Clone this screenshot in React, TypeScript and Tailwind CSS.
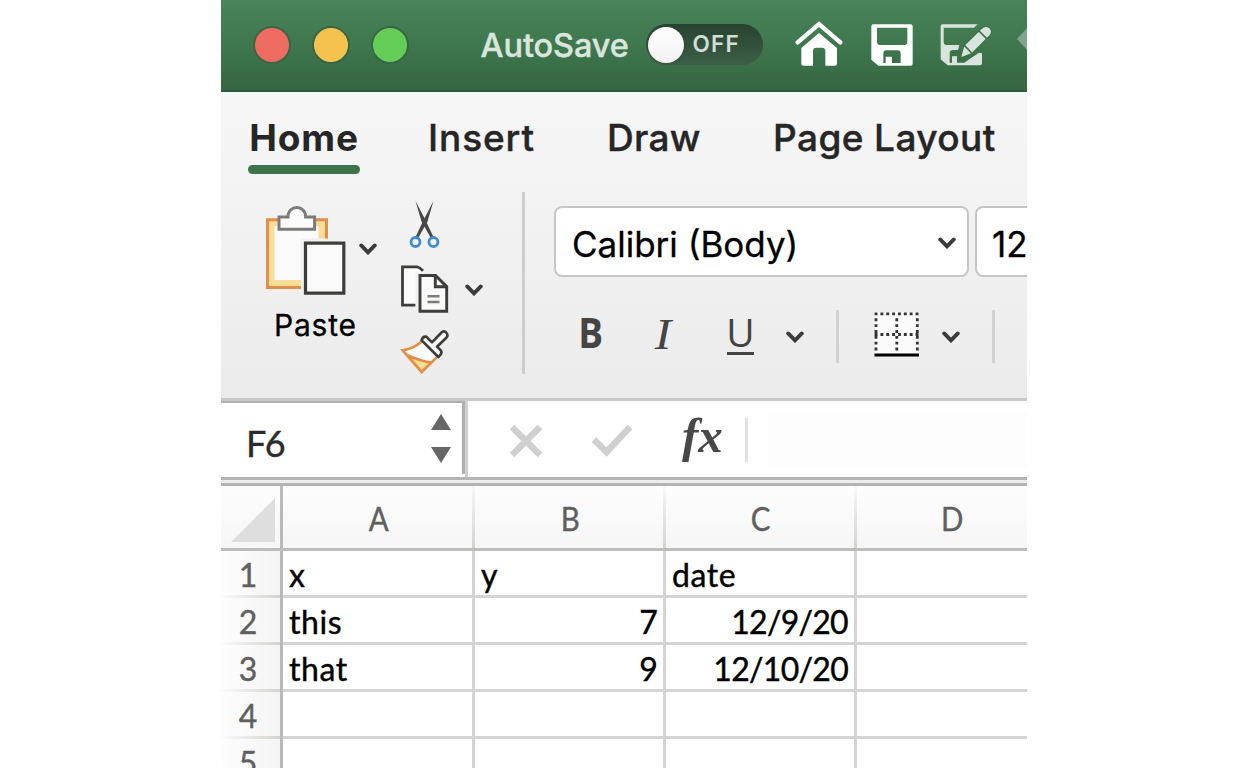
import React from "react";

const columns = ["A", "B", "C", "D"];
const columnWidths = ["w-[192px]", "w-[191px]", "w-[191px]", "w-[191px]"];
const rows = [
  ["x", "y", "date", ""],
  ["this", "7", "12/9/20", ""],
  ["that", "9", "12/10/20", ""],
  ["", "", "", ""],
  ["", "", "", ""],
];

function Chevron({ className = "" }: { className?: string }) {
  return (
    <svg className={`h-3 w-[18px] shrink-0 ${className}`} viewBox="0 0 18 12" fill="none">
      <path d="M2.2 2.4 9 9.4l6.8-7" stroke="#3b3b3b" strokeWidth="3.8" strokeLinecap="round" />
    </svg>
  );
}

function HomeIcon() {
  return (
    <svg className="h-[46px] w-12 shrink-0" viewBox="509 62 144 138">
      <path d="M517 126 581 71l64 55" fill="none" stroke="#fff" strokeWidth="13" strokeLinecap="round" />
      <path d="M528 143 581 98l54 45v47q0 6-6 6h-29v-44q0-10-10-10h-17q-10 0-10 10v44h-29q-6 0-6-6z" fill="#fff" />
    </svg>
  );
}

function SaveIcon() {
  return (
    <svg className="h-[42px] w-[42px] shrink-0" viewBox="739 71 126 126">
      <path
        fill="#fff"
        fillRule="evenodd"
        d="M746 72h112q6 0 6 6v112q0 6-6 6h-97l-21-18V78q0-6 6-6zM757 82v43q0 9 9 9h73q9 0 9-9V82zM776 188h7v-19h19v19h26v-28q0-10-10-10h-32q-10 0-10 10z"
      />
    </svg>
  );
}

function SaveEditIcon() {
  return (
    <svg className="h-[45px] w-[56px] shrink-0" viewBox="940 68 168 135">
      <path
        fill="#d9e5dc"
        fillRule="evenodd"
        d="M949 72h113l-12 10h-90v43q0 9 9 9h38l-4 15h-15q-10 0-10 10v28h7v-19h15v19h22l17-12 27-18 9 2v30q0 6-6 6h-97l-21-18V78q0-6 6-6z"
      />
      <path
        d="M1013 170 1022 137 1075 85Q1086 75 1097 84 1107 94 1097 105L1044 158z"
        fill="#d9e5dc"
        stroke="#3d7249"
        strokeWidth="7"
        paintOrder="stroke"
      />
      <path d="m1066 92 23 23M1022 135l22 23" stroke="#3d7249" strokeWidth="5" />
    </svg>
  );
}

function PasteIcon() {
  return (
    <svg className="h-[92px] w-[84px] shrink-0" viewBox="264 205 84 92" fill="none">
      <path d="M267.5 219.8h59v67.7h-59z" fill="#f6dd98" stroke="#e38d45" strokeWidth="3" />
      <path d="M274.5 226h44v54h-44z" fill="#fafafa" />
      <path d="M301 238.5h28V292h-28z" fill="#f1f1f1" />
      <path
        d="M279 217h9c0-6 4-9.500 8.800-9.500s8.800 3.500 8.800 9.500h9v12.200H279z"
        fill="#fbfbfb"
        stroke="#7b7b79"
        strokeWidth="3"
      />
      <path d="M305.500 243.200h38.300v50h-38.300z" fill="#fafafa" stroke="#3d3d3b" strokeWidth="3.200" />
    </svg>
  );
}

function CutIcon() {
  return (
    <svg className="h-[48px] w-[34px]" viewBox="408 200 34 48" fill="none">
      <path d="m415.500 201 9.700 18.500 8 17-2.400 1.400-9.300-16.400z" fill="#474747" />
      <path d="m433.500 201-9.700 18.500-8 17 2.400 1.400 9.300-16.400z" fill="#474747" />
      <circle cx="415.500" cy="242" r="4.500" stroke="#3f8ccf" strokeWidth="2.800" />
      <circle cx="433.400" cy="242" r="4.500" stroke="#3f8ccf" strokeWidth="2.800" />
    </svg>
  );
}

function CopyIcon() {
  return (
    <svg className="h-[50px] w-[50px]" viewBox="400 264 50 50" fill="none">
      <path d="M415.500 305h-13V267H417l6 4v34z" fill="#fafafa" />
      <path d="M415.500 305.200h-13V266.800H417q3 .5 6 4" stroke="#3d3d3b" strokeWidth="2.800" />
      <path d="M415.700 272h8v36h-8z" fill="#f1f1f1" />
      <path d="M420 275.500h15.500l11.200 11.200v24.600H420z" fill="#fafafa" stroke="#3d3d3b" strokeWidth="2.900" />
      <path d="M435.300 275.500v11.300h11.400" stroke="#3d3d3b" strokeWidth="2.900" />
      <path d="M427.500 296.200h12M427.500 302h12" stroke="#7b7b79" strokeWidth="2.500" />
    </svg>
  );
}

function FormatPainterIcon() {
  return (
    <svg className="h-[46px] w-[50px]" viewBox="480 416 150 138" fill="none">
      <path d="M546 455q-30 25-58 28l57 65 45-44z" fill="#fafafa" />
      <path d="m503 499 74 22-32 27z" fill="#f6dd98" />
      <path d="M546 456q-28 24-58 27l57 65 45-44M499 496q44 20 78 24" stroke="#e38d45" strokeWidth="8" />
      <path
        d="M545 453q2-12 14-11l17 17 27-28q8-8 15-2 8 8 1 16l-28 27 12 12q5 9-8 19z"
        fill="#fafafa"
        stroke="#3d3d3b"
        strokeWidth="8"
        strokeLinejoin="round"
      />
    </svg>
  );
}

function BorderIcon() {
  return (
    <svg className="h-[46px] w-[46px] shrink-0" viewBox="874 311 46 46" fill="none">
      <path d="M875 312h43v42h-43z" fill="#fbfbfb" />
      <g stroke="#333" strokeWidth="2.800" strokeDasharray="2.900 2.950">
        <path d="M874.600 313.800h44.600M874.600 334.500h44.600" />
        <path d="M876 318.300v34M896.800 318.300v34M917.300 318.300v34" />
      </g>
      <circle cx="896.800" cy="334.500" r="1.500" fill="#fff" />
      <path d="M874.500 355h44.500" stroke="#000" strokeWidth="3" />
    </svg>
  );
}

function TitleBar() {
  return (
    <header className="flex h-[92px] items-start border-b-2 border-[#2f5d3c] bg-linear-to-b from-[#49845b] via-[#3f774e] to-[#356641] pt-[21px]">
      <div className="mt-[5px] ml-[31.500px] flex shrink-0 gap-[21px]">
        <span className="size-[38px] rounded-full border-2 border-[#386744] bg-[#ed6b60]" />
        <span className="size-[38px] rounded-full border-2 border-[#386744] bg-[#f5c250]" />
        <span className="size-[38px] rounded-full border-2 border-[#386744] bg-[#63cd57]" />
      </div>
      <span className="ml-[72px] w-[150px] shrink-0 pt-[7px] text-[32.500px] leading-9 font-medium tracking-[-0.100px] whitespace-nowrap text-[#d9e6dd] [-webkit-text-stroke:0.4px]">
        AutoSave
      </span>
      <div className="mt-[3px] ml-[15px] flex h-[41px] w-[117px] shrink-0 items-center rounded-full bg-linear-to-b from-[#27432f] to-[#3d5f48] pl-[2px]">
        <span className="size-9 rounded-full bg-linear-to-b from-white to-[#f1f1f1] shadow" />
        <span className="ml-[9px] text-[22.500px] leading-none font-semibold tracking-[1.200px] text-[#d3ded7]">OFF</span>
      </div>
      <div className="ml-8 flex shrink-0">
        <HomeIcon />
        <div className="mt-[3px] ml-[28px]">
          <SaveIcon />
        </div>
        <div className="mt-[2px] ml-[24px]">
          <SaveEditIcon />
        </div>
        <svg className="mt-[3px] ml-[24px] h-8 w-4 shrink-0" viewBox="0 0 16 32">
          <path d="M0 15 11 3v24z" fill="#7fa58a" />
        </svg>
      </div>
    </header>
  );
}

function Tabs() {
  return (
    <nav className="flex h-[98px] items-start pt-[27px] pl-[27px] text-[37px] leading-[36px] font-medium whitespace-nowrap text-[#262626]">
      <div className="flex w-[112px] flex-col items-center">
        <span className="pt-px leading-[35px] font-bold tracking-[0.900px]">Home</span>
        <span className="mt-[10px] h-[9px] w-full rounded-full bg-[#3b734a]" />
      </div>
      <span className="ml-[68px] w-[110px] pt-px tracking-[0.900px] [-webkit-text-stroke:0.4px]">Insert</span>
      <span className="ml-[69px] w-[96px] pt-px tracking-[0.300px] [-webkit-text-stroke:0.4px]">Draw</span>
      <span className="ml-[70px] pt-px tracking-[0.400px] [-webkit-text-stroke:0.4px]">Page Layout</span>
    </nav>
  );
}

function Ribbon() {
  return (
    <section className="flex h-[208px] items-start">
      <div className="flex w-[160px] shrink-0 flex-col pt-[15px] pl-[43px]">
        <div className="flex items-start">
          <PasteIcon />
          <Chevron className="mt-[38px] ml-[11px]" />
        </div>
        <span className="mt-[12px] ml-[10px] text-[30px] leading-[32px] tracking-[0.800px] text-black [-webkit-text-stroke:0.3px]">
          Paste
        </span>
      </div>
      <div className="ml-[19px] flex w-[122px] shrink-0 flex-col pt-[10px]">
        <div className="ml-[8px]">
          <CutIcon />
        </div>
        <div className="mt-[16px] flex items-center">
          <CopyIcon />
          <Chevron className="mt-[2px] ml-[15px]" />
        </div>
        <div className="mt-[14px]">
          <FormatPainterIcon />
        </div>
      </div>
      <span className="mt-[2px] h-[182px] w-[3px] shrink-0 bg-[#cdcdcd]" />
      <div className="ml-[29px] w-[500px] shrink-0 pt-[16px]">
        <div className="flex gap-[6px]">
          <div className="flex h-[71px] w-[415px] shrink-0 items-center rounded-lg border-2 border-[#c6c6c6] bg-white px-4 pr-[11px]">
            <span className="flex-1 pt-[5px] text-[35px] leading-none text-black [-webkit-text-stroke:0.3px]">
              Calibri (Body)
            </span>
            <Chevron className="mt-[2px]" />
          </div>
          <div className="flex h-[71px] w-[120px] shrink-0 items-center rounded-lg border-2 border-[#c6c6c6] bg-white pl-[15px]">
            <span className="pt-[5px] text-[35px] leading-none text-black [-webkit-text-stroke:0.3px]">12</span>
          </div>
        </div>
        <div className="mt-[32px] flex h-[54px] items-center text-[#444]">
          <span className="ml-[23px] w-[26px] origin-center scale-x-90 pb-[8px] font-['Open_Sans',sans-serif] text-[41px] leading-[48px] font-bold">
            B
          </span>
          <span className="ml-[53px] w-[24px] origin-center scale-x-110 pb-[4px] font-['Liberation_Serif',serif] text-[45px] leading-[50px] italic">
            I
          </span>
          <span className="ml-[47px] flex w-[27px] flex-col items-center pb-[4px]">
            <span className="font-['Open_Sans',sans-serif] text-[39px] leading-[36px]">U</span>
            <span className="mt-[2px] h-[3px] w-full bg-[#444]" />
          </span>
          <Chevron className="mt-[1px] ml-[32px]" />
          <span className="ml-[32px] h-[53px] w-[3px] bg-[#d2d2d2]" />
          <div className="-mt-[4px] ml-[35px]">
            <BorderIcon />
          </div>
          <Chevron className="mt-[1px] ml-[22px]" />
          <span className="ml-[32px] h-[53px] w-[3px] bg-[#d2d2d2]" />
        </div>
      </div>
    </section>
  );
}

function FormulaBar() {
  return (
    <div className="flex h-[82px] items-start border-t-[3px] border-b-[3px] border-t-[#c9c9c9] border-b-[#b5b5b5] bg-white">
      <div className="flex h-[76px] w-[247px] shrink-0 border-r-[3px] border-[#cfcfcf]">
        <div className="flex h-[73px] w-full items-start justify-between border-t-2 border-r-[3px] border-[#b0b0b0] pt-[10px] pr-[11px] pl-[25px] font-['Lato',sans-serif]">
          <span className="pt-[6px] text-[36px] leading-[48px] tracking-[-1.500px] text-[#2b2b2b] [-webkit-text-stroke:0.4px]">
            F6
          </span>
          <svg className="h-[50px] w-5" viewBox="0 0 20 50" fill="#666">
            <path d="M10 1 20 17H0zM10 50 0 34h20z" />
          </svg>
        </div>
      </div>
      <svg className="mt-[23px] ml-[41px] h-[34px] w-[34px] shrink-0" viewBox="0 0 34 34" fill="none">
        <path d="m3 3 28 28M31 3 3 31" stroke="#cfcfcf" strokeWidth="6.500" />
      </svg>
      <svg className="mt-[23px] ml-[48px] h-[34px] w-[42px] shrink-0" viewBox="0 0 42 34" fill="none">
        <path d="M3 15.500 15.500 28 39 3" stroke="#cfcfcf" strokeWidth="6.500" />
      </svg>
      <span className="ml-[49px] w-[54px] shrink-0 pt-[7px] font-['Liberation_Serif',serif] text-[49px] leading-[56px] font-bold text-[#484848] italic">
        fx
      </span>
      <span className="mt-[17px] ml-[9px] h-[44px] w-[3px] shrink-0 bg-[#e2e2e2]" />
      <span className="mt-[11px] ml-[20px] h-[57px] flex-1 bg-[#fdfdfd]" />
    </div>
  );
}

function Sheet() {
  return (
    <div className="font-['Lato',sans-serif] text-[32px] leading-[44px] [-webkit-text-stroke:0.4px]">
      <div className="flex h-[65px] border-b-[3px] border-[#bdbdbb] bg-linear-to-b from-[#fdfdfd] to-[#f6f6f6]">
        <div className="w-[62px] shrink-0 border-r-[3px] border-[#b9b9b9] pt-[12px] pl-[10px]">
          <svg className="h-[44px] w-[44px]" viewBox="0 0 44 44">
            <path d="M44 0v44H0z" fill="#dedede" />
          </svg>
        </div>
        {columns.map((name, i) => (
          <div key={name} className={`flex shrink-0 ${columnWidths[i]}`}>
            <span className="flex-1 pt-[11px] pl-[2px] text-center text-[#5f5f5f]">
              <span className="inline-block scale-x-[0.92]">{name}</span>
            </span>
            <span className="w-[3px] bg-linear-to-b from-[#f7f7f7] to-[#d3d3d0]" />
          </div>
        ))}
      </div>
      {rows.map((cells, r) => (
        <div key={r} className="flex h-[47px]">
          <div className="flex w-[62px] shrink-0 flex-col border-r-[3px] border-[#b9b9b9] bg-linear-to-r from-[#fdfdfd] to-[#f4f4f4]">
            <span className="h-[44px] pt-[2px] pr-[5px] text-center text-[#5f5f5f]">{r + 1}</span>
            <span className="h-[3px] bg-linear-to-r from-[#fafafa] to-[#d3d3d0]" />
          </div>
          {cells.map((value, c) => (
            <div
              key={c}
              className={`shrink-0 border-r-[3px] border-b-[3px] border-[#d4d4d4] bg-white px-[6px] pt-[2px] text-black ${columnWidths[c]} ${
                r > 0 && c > 0 ? "text-right tracking-[-0.700px]" : "text-left tracking-[0.600px]"
              }`}
            >
              {value}
            </div>
          ))}
        </div>
      ))}
    </div>
  );
}

export default function App() {
  return (
    <div className="flex h-screen overflow-hidden bg-white pl-[221px] font-['Inter',sans-serif]">
      <main className="h-[768px] w-[806px] shrink-0 overflow-hidden">
        <TitleBar />
        <div className="bg-linear-to-b from-[#f6f6f6] via-[#f1f1f1] to-[#ebebeb]">
          <Tabs />
          <Ribbon />
        </div>
        <FormulaBar />
        <div className="h-[3px] bg-[#ededed]" />
        <div className="h-[3px] bg-[#b3b3b3]" />
        <Sheet />
      </main>
    </div>
  );
}
